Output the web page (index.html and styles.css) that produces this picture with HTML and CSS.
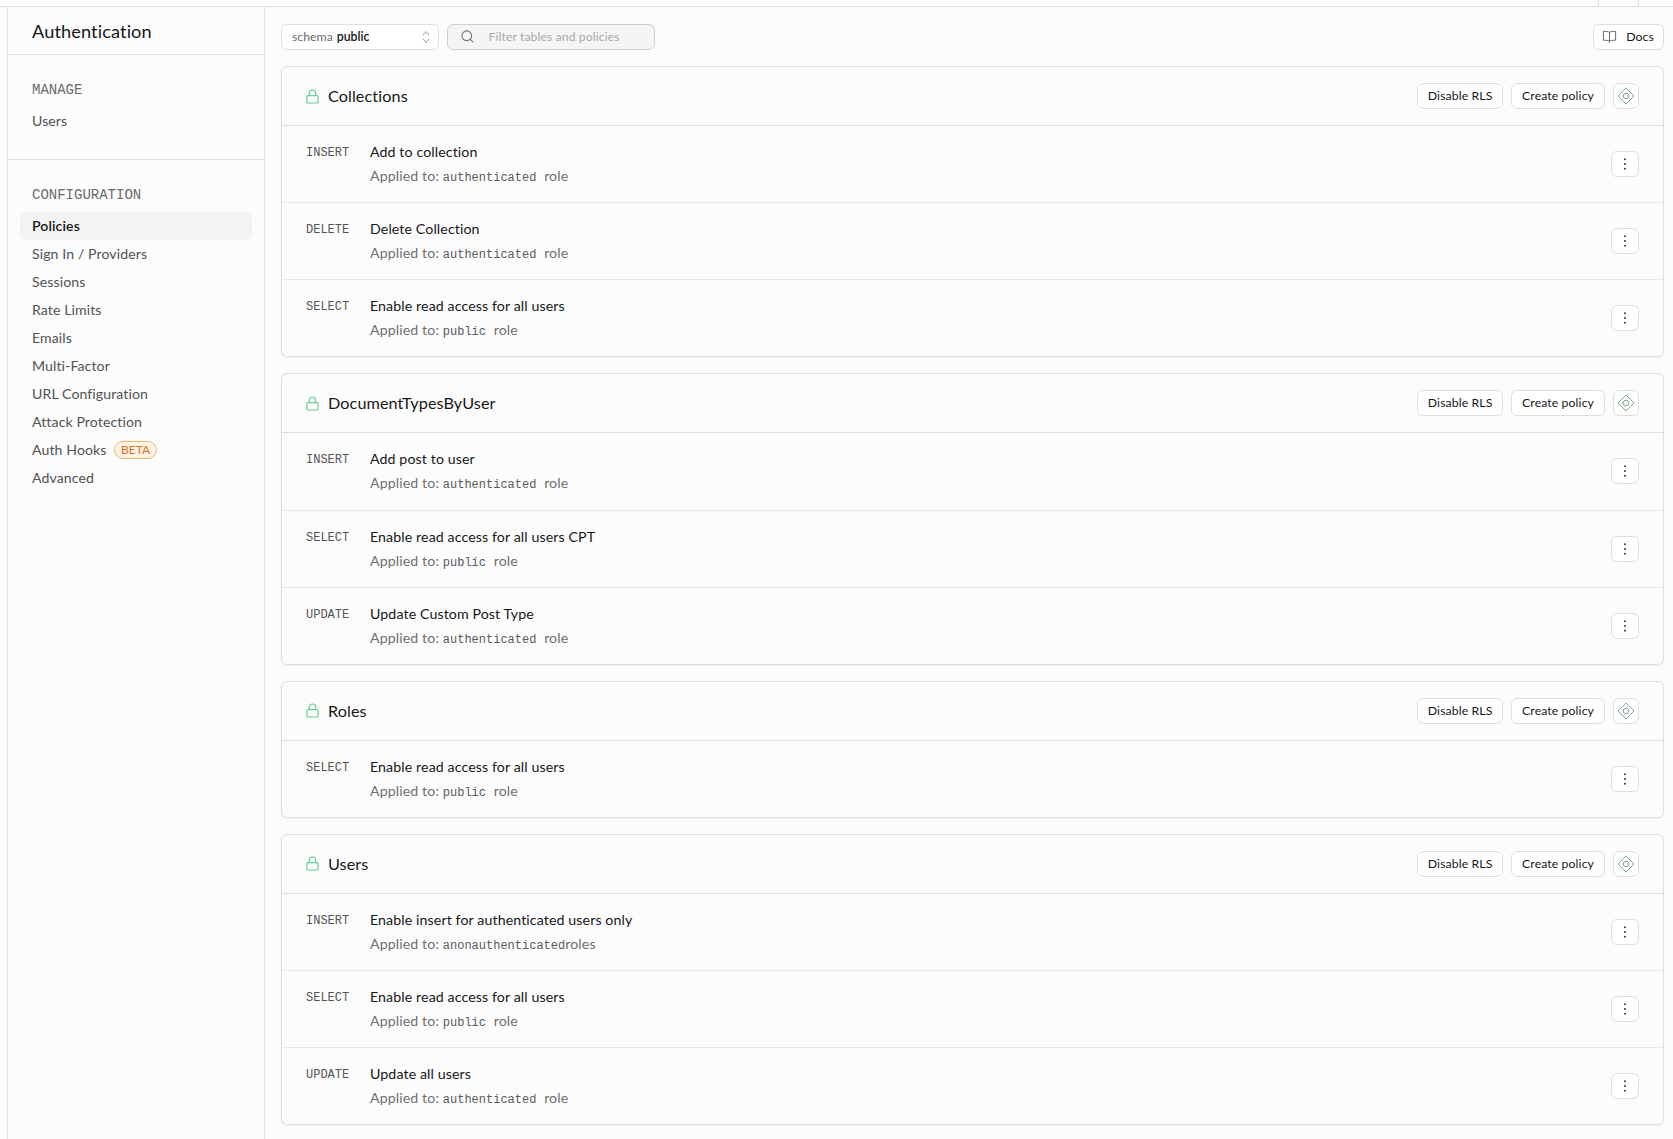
FILE: index.html
```html
<!DOCTYPE html>
<html lang="en">
<head>
<meta charset="utf-8">
<title>Policies | Authentication</title>
<link rel="stylesheet" href="styles.css">
</head>
<body>
<svg class="sprite" width="0" height="0" aria-hidden="true">
  <symbol id="i-lock" viewBox="0 0 14 16"><rect x="1" y="7" width="12" height="8" rx="1.4"/><path d="M3.6 7V4.4a3.4 3.4 0 0 1 6.8 0V7"/></symbol>
  <symbol id="i-diamond" viewBox="0 0 18 18"><path d="M9 1 17 9 9 17 1 9Z"/><circle cx="9" cy="9" r="2.8"/></symbol>
  <symbol id="i-dots" viewBox="0 0 16 16"><circle cx="8" cy="3.2" r="1.05"/><circle cx="8" cy="8" r="1.05"/><circle cx="8" cy="12.8" r="1.05"/></symbol>
</svg>
<header class="topbar"><span class="top-cell"></span></header>
<div class="shell">
  <div class="gutter"></div>
  <aside class="sidebar">
    <div class="side-title">Authentication</div>
    <section class="side-group side-manage">
      <h4 class="side-label">MANAGE</h4>
      <a class="side-link">Users</a>
    </section>
    <section class="side-group">
      <h4 class="side-label">CONFIGURATION</h4>
      <a class="side-link active">Policies</a>
      <a class="side-link">Sign In / Providers</a>
      <a class="side-link">Sessions</a>
      <a class="side-link">Rate Limits</a>
      <a class="side-link">Emails</a>
      <a class="side-link">Multi-Factor</a>
      <a class="side-link">URL Configuration</a>
      <a class="side-link">Attack Protection</a>
      <a class="side-link">Auth Hooks <span class="beta">BETA</span></a>
      <a class="side-link">Advanced</a>
    </section>
  </aside>
  <main class="content">
    <div class="toolbar">
      <div class="schema"><span class="schema-k">schema</span> <span class="schema-v">public</span>
        <svg class="chev" viewBox="0 0 10 16"><path d="M2 6 5 2.5 8 6M2 10 5 13.500 8 10"/></svg>
      </div>
      <div class="filter">
        <svg class="search" viewBox="0 0 16 16"><circle cx="7.2" cy="7.2" r="5.2"/><path d="m11 11 3.200 3.200"/></svg>
        <span>Filter tables and policies</span>
      </div>
      <button class="btn docs">
        <svg class="book" viewBox="0 0 16 16"><path d="M8 3.500C6.800 2.700 5 2.500 1.500 2.500v9.500c3.500 0 5.300.2 6.500 1 1.200-.8 3-1 6.500-1V2.500C11 2.500 9.200 2.700 8 3.500ZM8 3.500V14.500"/></svg>
        Docs</button>
    </div>

    <section class="card">
      <header class="card-head">
        <svg class="lock"><use href="#i-lock"/></svg><h3 class="card-title">Collections</h3>
        <button class="btn rls">Disable RLS</button><button class="btn">Create policy</button>
        <button class="btn sq"><svg class="diamond"><use href="#i-diamond"/></svg></button>
      </header>
      <div class="row"><code class="cmd">INSERT</code><div class="info"><div class="name">Add to collection</div><div class="applied">Applied to: <code>authenticated</code> role</div></div><button class="btn more"><svg class="dots"><use href="#i-dots"/></svg></button></div>
      <div class="row"><code class="cmd">DELETE</code><div class="info"><div class="name">Delete Collection</div><div class="applied">Applied to: <code>authenticated</code> role</div></div><button class="btn more"><svg class="dots"><use href="#i-dots"/></svg></button></div>
      <div class="row"><code class="cmd">SELECT</code><div class="info"><div class="name">Enable read access for all users</div><div class="applied">Applied to: <code>public</code> role</div></div><button class="btn more"><svg class="dots"><use href="#i-dots"/></svg></button></div>
    </section>

    <section class="card">
      <header class="card-head">
        <svg class="lock"><use href="#i-lock"/></svg><h3 class="card-title">DocumentTypesByUser</h3>
        <button class="btn rls">Disable RLS</button><button class="btn">Create policy</button>
        <button class="btn sq"><svg class="diamond"><use href="#i-diamond"/></svg></button>
      </header>
      <div class="row"><code class="cmd">INSERT</code><div class="info"><div class="name">Add post to user</div><div class="applied">Applied to: <code>authenticated</code> role</div></div><button class="btn more"><svg class="dots"><use href="#i-dots"/></svg></button></div>
      <div class="row"><code class="cmd">SELECT</code><div class="info"><div class="name">Enable read access for all users CPT</div><div class="applied">Applied to: <code>public</code> role</div></div><button class="btn more"><svg class="dots"><use href="#i-dots"/></svg></button></div>
      <div class="row"><code class="cmd">UPDATE</code><div class="info"><div class="name">Update Custom Post Type</div><div class="applied">Applied to: <code>authenticated</code> role</div></div><button class="btn more"><svg class="dots"><use href="#i-dots"/></svg></button></div>
    </section>

    <section class="card">
      <header class="card-head">
        <svg class="lock"><use href="#i-lock"/></svg><h3 class="card-title">Roles</h3>
        <button class="btn rls">Disable RLS</button><button class="btn">Create policy</button>
        <button class="btn sq"><svg class="diamond"><use href="#i-diamond"/></svg></button>
      </header>
      <div class="row"><code class="cmd">SELECT</code><div class="info"><div class="name">Enable read access for all users</div><div class="applied">Applied to: <code>public</code> role</div></div><button class="btn more"><svg class="dots"><use href="#i-dots"/></svg></button></div>
    </section>

    <section class="card">
      <header class="card-head">
        <svg class="lock"><use href="#i-lock"/></svg><h3 class="card-title">Users</h3>
        <button class="btn rls">Disable RLS</button><button class="btn">Create policy</button>
        <button class="btn sq"><svg class="diamond"><use href="#i-diamond"/></svg></button>
      </header>
      <div class="row"><code class="cmd">INSERT</code><div class="info"><div class="name">Enable insert for authenticated users only</div><div class="applied">Applied to: <code class="tight">anon</code><code class="tight">authenticated</code>roles</div></div><button class="btn more"><svg class="dots"><use href="#i-dots"/></svg></button></div>
      <div class="row"><code class="cmd">SELECT</code><div class="info"><div class="name">Enable read access for all users</div><div class="applied">Applied to: <code>public</code> role</div></div><button class="btn more"><svg class="dots"><use href="#i-dots"/></svg></button></div>
      <div class="row"><code class="cmd">UPDATE</code><div class="info"><div class="name">Update all users</div><div class="applied">Applied to: <code>authenticated</code> role</div></div><button class="btn more"><svg class="dots"><use href="#i-dots"/></svg></button></div>
    </section>
  </main>
</div>
</body>
</html>
```
FILE: styles.css
```css
* { box-sizing: border-box; }
html, body { margin: 0; height: 100%; }
body {
  background: #fcfcfc;
  color: #171717;
  font-family: "Lato", "Liberation Sans", sans-serif;
  font-size: 14px;
  overflow: hidden;
}
.sprite { position: absolute; }
.topbar {
  height: 7px;
  border-bottom: 1px solid #dedede;
  display: flex;
  justify-content: flex-end;
  padding-right: 34px;
}
.top-cell {
  width: 41px;
  border-left: 1px solid #dedede;
  border-right: 1px solid #dedede;
}
.shell { display: flex; height: 1132px; }
.gutter { width: 8px; border-right: 1px solid #dedede; flex: none; }
.sidebar { width: 257px; flex: none; border-right: 1px solid #dedede; }
.side-title {
  height: 48px;
  padding: 13px 24px 0;
  font-size: 18.2px;
  letter-spacing: .1px;
  border-bottom: 1px solid #dedede;
}
.side-group { padding: 25px 12px 0; }
.side-manage { height: 105px; border-bottom: 1px solid #dedede; }
.side-label {
  margin: 0 12px 6.6px;
  font: 400 14px/20px "Liberation Mono", monospace;
  color: #6a6a6a;
}
.side-link {
  display: flex;
  align-items: center;
  height: 28px;
  padding: 0 12px;
  border-radius: 6px;
  color: #525252;
  font-size: 14.1px;
  letter-spacing: .1px;
}
.side-link.active { background: #f3f3f3; color: #171717; font-weight: 600; }
.beta {
  margin-left: 7.500px;
  height: 18px;
  padding: 0 6px;
  border: 1px solid #f1b56c;
  border-radius: 9px;
  background: #fdf3e6;
  color: #d9711f;
  font-size: 12px;
  line-height: 16px;
  letter-spacing: 0;
}
.content { flex: 1; min-width: 0; padding: 17px 9px 0 16px; display: flex; flex-direction: column; gap: 16px; }
.toolbar { display: flex; gap: 8px; height: 26px; align-items: stretch; }
.schema {
  width: 158px;
  display: flex;
  align-items: center;
  gap: 4px;
  padding: 0 7px 1px 10px;
  background: #fff;
  border: 1px solid #dedede;
  border-radius: 6px;
  font-size: 12.3px;
}
.schema-k { color: #6b6b6b; }
.schema-v { color: #171717; font-weight: 600; }
.chev { width: 10px; height: 16px; margin-left: auto; fill: none; stroke: #9a9a9a; stroke-width: 1; }
.filter {
  width: 208px;
  display: flex;
  align-items: center;
  padding: 0 0 1px 12px;
  background: #f5f5f5;
  border: 1px solid #cfcfcf;
  border-radius: 6px;
  color: #a8a8a8;
  font-size: 12.2px;
  letter-spacing: .1px;
}
.search { width: 15px; height: 15px; margin-right: 13.5px; fill: none; stroke: #707070; stroke-width: 1.100; }
.btn {
  display: inline-flex;
  align-items: center;
  justify-content: center;
  height: 26px;
  padding: 0 10px 1px;
  background: #fff;
  border: 1px solid #dedede;
  border-radius: 6px;
  color: #171717;
  font: 12.250px "Lato", "Liberation Sans", sans-serif;
  letter-spacing: .1px;
  white-space: nowrap;
}
.rls { width: 86px; padding-left: 0; padding-right: 0; }
.docs { margin-left: auto; width: 71px; padding: 0 1px 1px 0; gap: 9px; }
.book { width: 15px; height: 15px; fill: none; stroke: #606060; stroke-width: 1; }
.card {
  background: #fcfcfc;
  border: 1px solid #dedede;
  border-radius: 6px;
  box-shadow: 0 1px 2px rgba(0,0,0,.05);
  flex: none;
}
.card-head {
  height: 59px;
  display: flex;
  align-items: center;
  gap: 8px;
  padding: 0 24px;
  border-bottom: 1px solid #dedede;
}
.lock { width: 13px; height: 15px; flex: none; fill: none; stroke: #62cf94; stroke-width: 1.300; margin-right: 1px; }
.card-title { margin: 0 auto 1px 0; font-weight: 400; font-size: 16.200px; letter-spacing: .1px; }
.sq { width: 26px; padding: 0; }
.diamond { width: 18px; height: 18px; fill: none; stroke: #7fa98f; stroke-width: 1; }
.row {
  height: 77.150px;
  display: flex;
  align-items: flex-start;
  padding: 16px 24px 0;
  border-bottom: 1px solid #e8e8e8;
}
.row:last-child { border-bottom: 0; height: 76.150px; }
.cmd {
  width: 64px;
  flex: none;
  font: 12px/22px "Liberation Mono", monospace;
  color: #555;
}
.name { font-size: 14.200px; line-height: 20px; letter-spacing: .1px; }
.applied { margin-top: 4px; font-size: 14.200px; line-height: 20px; color: #707070; letter-spacing: .1px; }
.applied code { font: 12px "Liberation Mono", monospace; color: #5a5a5a; letter-spacing: 0; margin: 0 4px 0 0; }
.applied code.tight { margin: 0; }
.more { width: 28px; height: 26px; padding: 0; margin: 9px 0 0 auto; }
.dots { width: 16px; height: 16px; fill: #444; }
```
